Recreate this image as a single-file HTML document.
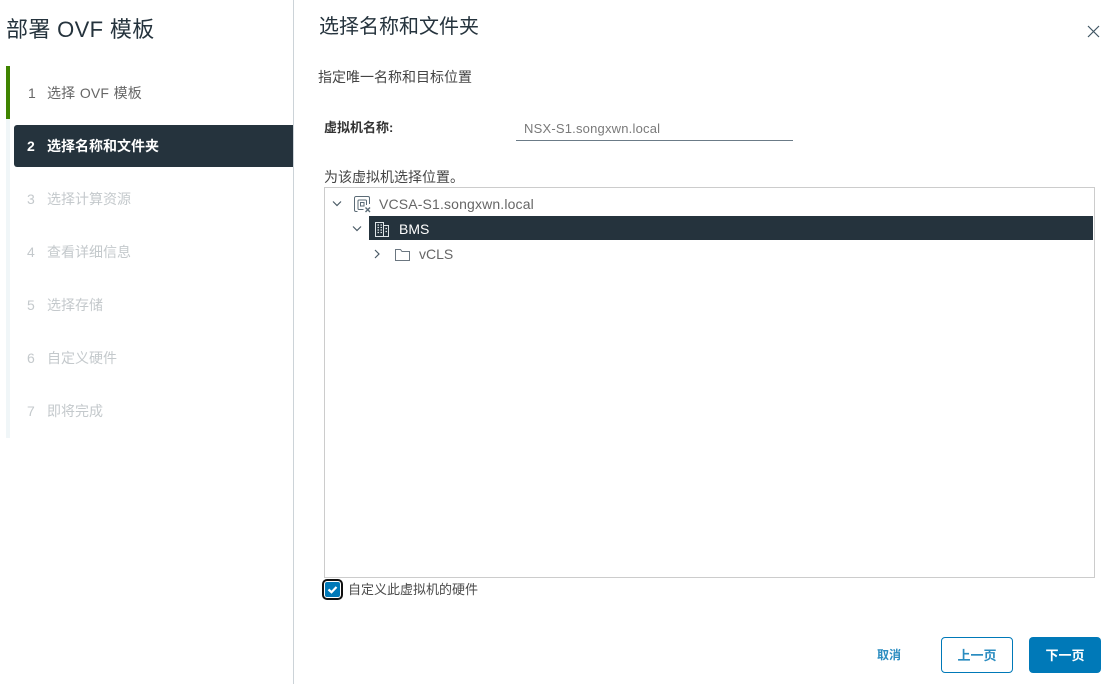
<!DOCTYPE html>
<html><head><meta charset="utf-8"><style>
html,body{margin:0;padding:0;background:#fff}
#p{position:relative;width:1110px;height:684px;overflow:hidden;background:#fff;font-family:"Liberation Sans","Noto Sans CJK SC",sans-serif;color:#333}
.a{position:absolute;white-space:nowrap}
.s{position:absolute;left:47px;font-size:14px;line-height:20px;white-space:nowrap;color:#666}
.n{position:absolute;left:27px;font-size:14px;line-height:20px;color:#666}
.d{color:#c4c9cc}
</style></head><body><div id="p">
<div class="a" style="left:293px;top:0;width:1px;height:684px;background:#ccd3d8"></div>
<div class="a" style="left:6px;top:15px;font-size:22px;line-height:30px;color:#25333d;letter-spacing:.35px">部署 OVF 模板</div>
<div class="a" style="left:6px;top:66px;width:4px;height:372px;background:#f0f6f8"></div>
<div class="a" style="left:6px;top:66px;width:4px;height:53px;background:#3f8400"></div>
<div class="a" style="left:14px;top:125px;width:279px;height:42px;background:#25333d;border-radius:3px 0 0 3px"></div>
<div class="n" style="left:28px;top:83px">1</div><div class="s" style="top:83px;word-spacing:.5px;letter-spacing:.15px">选择 OVF 模板</div>
<div class="n" style="top:136px;color:#fff;font-weight:bold">2</div><div class="s" style="top:136px;color:#fff;font-weight:bold">选择名称和文件夹</div>
<div class="n d" style="top:189px">3</div><div class="s d" style="top:189px">选择计算资源</div>
<div class="n d" style="top:242px">4</div><div class="s d" style="top:242px">查看详细信息</div>
<div class="n d" style="top:295px">5</div><div class="s d" style="top:295px">选择存储</div>
<div class="n d" style="top:348px">6</div><div class="s d" style="top:348px">自定义硬件</div>
<div class="n d" style="top:401px">7</div><div class="s d" style="top:401px">即将完成</div>

<div class="a" style="left:319px;top:13px;font-size:20px;line-height:28px;color:#25333d">选择名称和文件夹</div>
<svg class="a" style="left:1087px;top:25px" width="13" height="13" viewBox="0 0 13 13"><path d="M1 1L12 12M12 1L1 12" stroke="#3f5563" stroke-width="1.2" fill="none"/></svg>
<div class="a" style="left:318px;top:67px;font-size:14px;line-height:20px;color:#444">指定唯一名称和目标位置</div>
<div class="a" style="left:324px;top:118px;font-size:13px;line-height:20px;font-weight:bold;color:#333">虚拟机名称:</div>
<div class="a" style="left:524px;top:120px;font-size:13px;line-height:18px;color:#7a7a7a;letter-spacing:.2px">NSX-S1.songxwn.local</div>
<div class="a" style="left:516px;top:140px;width:277px;height:1px;background:#6b7b87"></div>
<div class="a" style="left:324px;top:167px;font-size:14px;line-height:20px;color:#444">为该虚拟机选择位置。</div>
<div class="a" style="left:324px;top:187px;width:769px;height:389px;border:1px solid #ccc"></div>
<div class="a" style="left:369px;top:216px;width:724px;height:24px;background:#25333d"></div>

<svg class="a" style="left:332px;top:200px" width="10" height="8" viewBox="0 0 10 8"><path d="M1 1.500L5 5.500L9 1.500" stroke="#4a5a66" stroke-width="1.200" fill="none"/></svg>
<svg class="a" style="left:353px;top:195px" width="19" height="19" viewBox="0 0 19 19" fill="none" stroke="#5b6b76" stroke-width="1"><path d="M4.500 16.500H3a1.500 1.500 0 0 1-1.500-1.500V3A1.500 1.500 0 0 1 3 1.500H15A1.500 1.500 0 0 1 16.500 3V9"/><path d="M10.500 14.500H6a1 1 0 0 1-1-1V6a1 1 0 0 1 1-1H12.500a1 1 0 0 1 1 1V10"/><rect x="7.500" y="7.500" width="3.500" height="3.500"/><path d="M12.500 12.500L17 17M17 12.500L12.500 17" stroke-width="1.400"/></svg>
<div class="a" style="left:379px;top:195px;font-size:14px;line-height:18px;color:#666;letter-spacing:.15px">VCSA-S1.songxwn.local</div>

<svg class="a" style="left:352px;top:225px" width="10" height="8" viewBox="0 0 10 8"><path d="M1 1.500L5 5.500L9 1.500" stroke="#4a5a66" stroke-width="1.200" fill="none"/></svg>
<svg class="a" style="left:374px;top:221px" width="16" height="16" viewBox="0 0 16 16" fill="none" stroke="#dfe5e8" stroke-width="1"><rect x="1.500" y="1.500" width="8" height="14"/><path d="M9.500 4.500H14.500V15.500H9.500"/><path d="M3.500 4h1.500M6.500 4h1.500M3.500 6.500h1.500M6.500 6.500h1.500M3.500 9h1.500M6.500 9h1.500M3.500 11.500h1.500M6.500 11.500h1.500M11.500 7.500h1.500M11.500 10.500h1.500" stroke-width="1.200"/></svg>
<div class="a" style="left:399px;top:220px;font-size:14px;line-height:18px;color:#fff">BMS</div>

<svg class="a" style="left:373px;top:249px" width="8" height="10" viewBox="0 0 8 10"><path d="M2 1L6 5L2 9" stroke="#4a5a66" stroke-width="1.200" fill="none"/></svg>
<svg class="a" style="left:395px;top:248px" width="15" height="13" viewBox="0 0 15 13" fill="none" stroke="#6b7680" stroke-width="1"><path d="M.5 12.500V1.500H5.500L7 3.500H14.500V12.500Z"/></svg>
<div class="a" style="left:419px;top:245px;font-size:14px;line-height:18px;color:#666">vCLS</div>

<div class="a" style="left:322px;top:579px;width:21px;height:21px;box-sizing:border-box;border:2px solid #111;border-radius:5px;background:#fff"></div>
<div class="a" style="left:325px;top:582px;width:15px;height:15px;background:#0079b8;border-radius:2px"></div>
<svg class="a" style="left:325px;top:582px" width="15" height="15" viewBox="0 0 15 15"><path d="M3.500 7.500L6.500 10.200L11.500 5" stroke="#fff" stroke-width="2.200" fill="none"/></svg>
<div class="a" style="left:348px;top:581px;font-size:13px;line-height:18px;color:#4a4a4a">自定义此虚拟机的硬件</div>

<div class="a" style="left:877px;top:647px;font-size:12px;line-height:16px;font-weight:bold;color:#2a8cc0">取消</div>
<div class="a" style="left:941px;top:637px;width:72px;height:36px;box-sizing:border-box;border:1px solid #0079b8;border-radius:4px;background:#fff;color:#2a8cc0;font-size:13px;font-weight:bold;line-height:35px;text-align:center">上一页</div>
<div class="a" style="left:1029px;top:637px;width:72px;height:36px;border-radius:4px;background:#0079b8;color:#fff;font-size:13px;font-weight:bold;line-height:37px;text-align:center">下一页</div>
</div></body></html>
